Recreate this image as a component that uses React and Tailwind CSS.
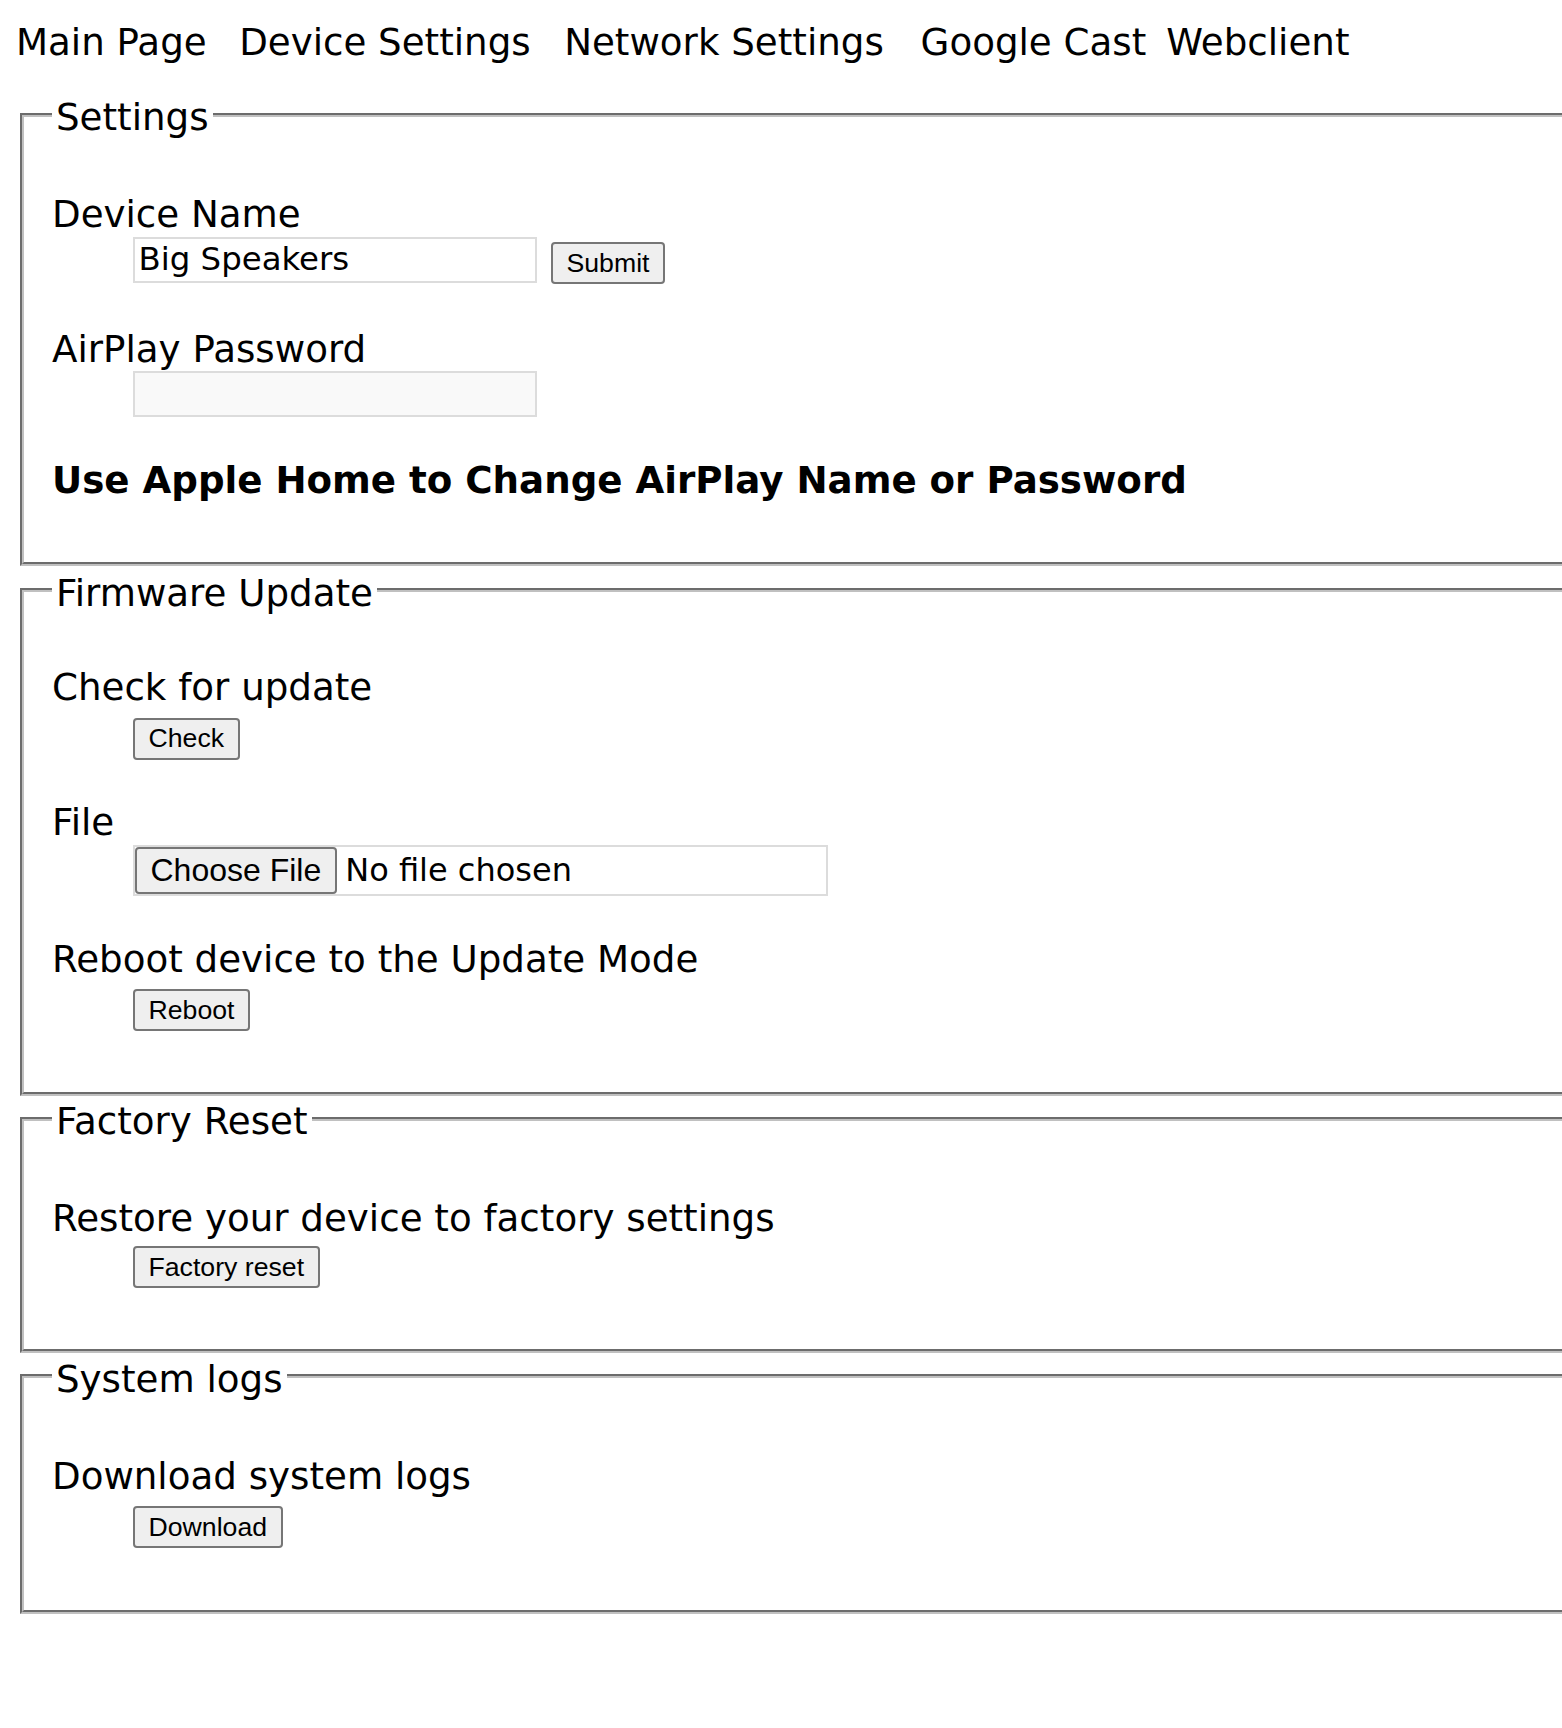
import { useState } from 'react';

const NAV_ITEMS = [
  { label: 'Main Page', className: '' },
  { label: 'Device Settings', className: 'ml-[32.5px]' },
  { label: 'Network Settings', className: 'ml-[33.5px]' },
  { label: 'Google Cast', className: 'ml-[36.8px]' },
  { label: 'Webclient', className: 'ml-[20px]' },
];

const BTN =
  "h-[42px] px-[14px] border-2 border-[#767676] rounded-[4px] bg-[#efefef] text-[26.67px] leading-none text-black font-['Liberation_Sans',Arial,sans-serif]";

function Section({ title, className, children }) {
  return (
    <fieldset
      className={`mx-[4px] w-[1600px] min-w-0 border-[4px] border-[#c0c0c0] [border-style:groove] pl-[28px] pr-[26px] pt-[12.9px] ${className}`}
    >
      <legend className="px-[4px] text-[37.2px] leading-[42.8px]">
        <span className="relative top-[3px]">{title}</span>
      </legend>
      {children}
    </fieldset>
  );
}

function Label({ className, children }) {
  return <div className={`text-[37.2px] leading-[42.8px] ${className}`}>{children}</div>;
}

function ActionRow({ label, button, labelClass = 'mt-[41.5px]', buttonClass = 'mt-[8.5px]' }) {
  return (
    <>
      <Label className={labelClass}>{label}</Label>
      <div className={`ml-[80.5px] flex ${buttonClass}`}>
        <button type="button" className={BTN}>
          {button}
        </button>
      </div>
    </>
  );
}

export default function App() {
  const [name, setName] = useState('Big Speakers');

  return (
    <div className="min-h-[1728px] w-full overflow-hidden bg-white px-[16px] pt-[20.7px] text-black font-['DejaVu_Sans',Verdana,sans-serif]">
      {/* top links */}
      <nav className="flex whitespace-nowrap text-[37.2px] leading-[42.8px]">
        {NAV_ITEMS.map((item) => (
          <a key={item.label} href="#" className={item.className}>
            {item.label}
          </a>
        ))}
      </nav>

      <Section title="Settings" className="mt-[30px] pb-[60px]">
        <Label className="mt-[44px]">Device Name</Label>
        <div className="ml-[80.5px] mt-[0.6px] flex items-start">
          <input
            value={name}
            onChange={(e) => setName(e.target.value)}
            className="h-[46px] w-[404px] border-2 border-[#dcdcdc] bg-white px-[4px] text-[32.4px] outline-none"
          />
          <button type="button" className={`${BTN} ml-[14px] mt-[5.6px]`}>
            Submit
          </button>
        </div>

        <Label className="mt-[43.5px]">AirPlay Password</Label>
        <div className="ml-[80.5px] mt-[0.4px] flex">
          <input
            type="password"
            disabled
            className="h-[46px] w-[404px] border-2 border-[#dcdcdc] bg-[#f9f9f9] px-[4px] text-[32px]"
          />
        </div>

        <div className="mt-[42.6px] text-[37.2px] font-bold leading-[42.8px]">
          Use Apple Home to Change AirPlay Name or Password
        </div>
      </Section>

      <Section title="Firmware Update" className="mt-[2.5px] pb-[61px]">
        <ActionRow labelClass="mt-[42px]" label="Check for update" button="Check" />

        <Label className="mt-[41px]">File</Label>
        <div className="ml-[80.5px] mt-[1.3px] flex h-[51.3px] w-[695px] items-center border-2 border-[#dcdcdc]">
          <button
            type="button"
            className="h-full px-[14px] border-2 border-[#767676] rounded-[4px] bg-[#efefef] text-[32px] leading-none font-['Liberation_Sans',Arial,sans-serif]"
          >
            Choose File
          </button>
          <span className="ml-[8px] text-[32px]">No file chosen</span>
        </div>

        <ActionRow label="Reboot device to the Update Mode" button="Reboot" />
      </Section>

      <Section title="Factory Reset" className="mt-[1.5px] pb-[61px]">
        <ActionRow
          labelClass="mt-[44px]"
          buttonClass="mt-[6.5px]"
          label="Restore your device to factory settings"
          button="Factory reset"
        />
      </Section>

      <Section title="System logs" className="mt-[1.3px] pb-[61.8px]">
        <ActionRow labelClass="mt-[44.2px]" label="Download system logs" button="Download" />
      </Section>
    </div>
  );
}
